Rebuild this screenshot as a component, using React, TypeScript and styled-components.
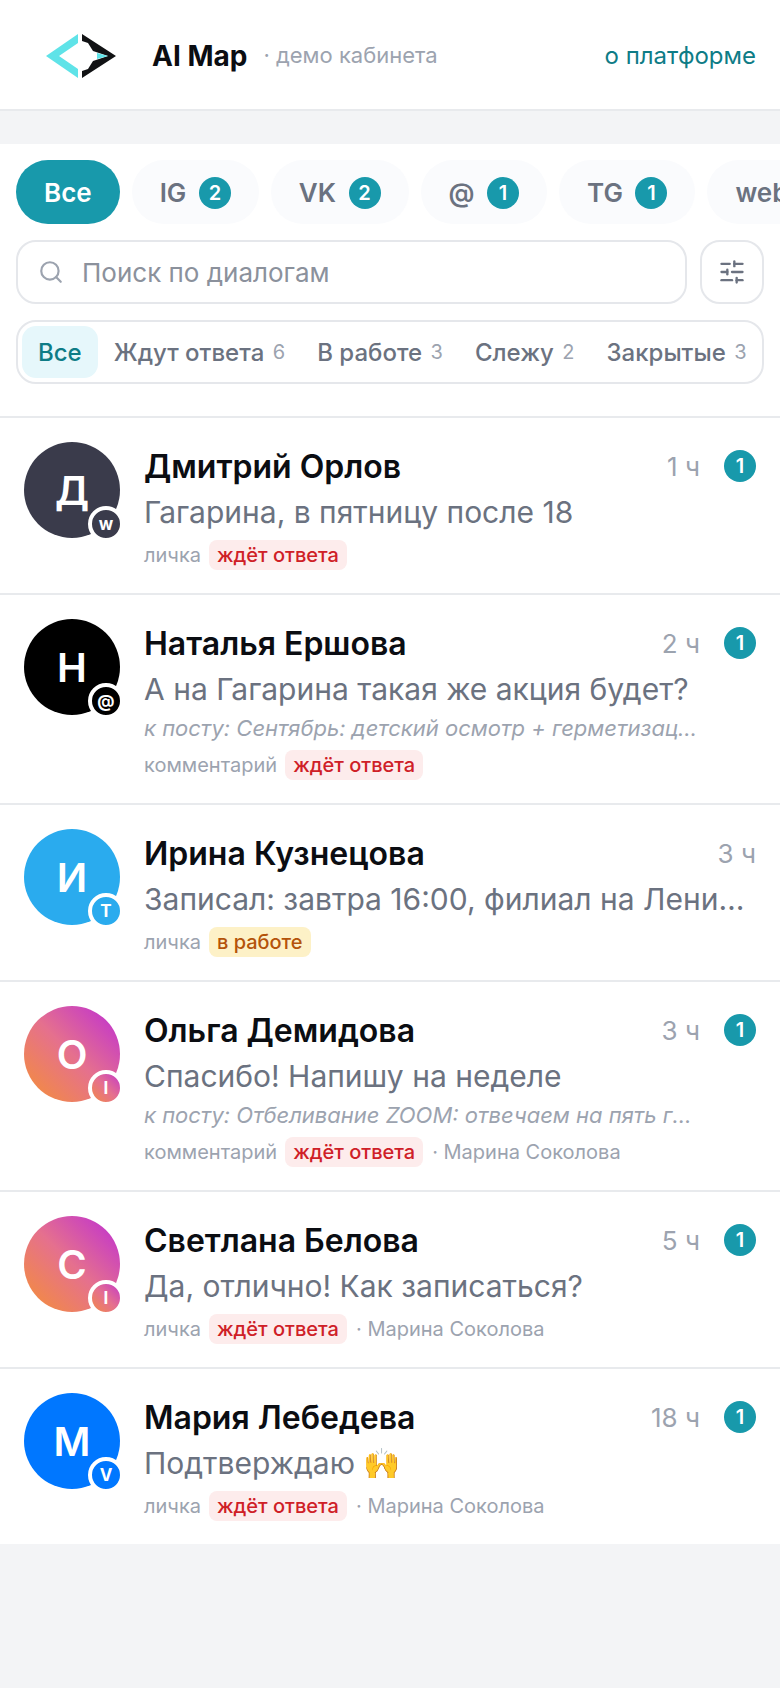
import { Search, SlidersHorizontal } from "lucide-react";
import { createGlobalStyle, styled } from "styled-components";

const GlobalStyle = createGlobalStyle`
  html, body {
    margin: 0;
    padding: 0;
    background: #f3f4f6;
    font-family: Inter, "Noto Sans", sans-serif;
  }
  * { box-sizing: border-box; }
`;

const Page = styled.div`
  width: 780px;
  min-height: 1688px;
  background: #f3f4f6;
  overflow: hidden;
`;

const Header = styled.header`
  height: 111px;
  background: #fff;
  border-bottom: 2px solid #e8eaed;
  display: flex;
  align-items: center;
  padding: 2px 24px 0 46px;
`;

const Logo = styled.svg`
  width: 71px;
  height: 44px;
  flex-shrink: 0;
  margin-right: 35px;
`;

const Brand = styled.span`
  font-size: 28px;
  font-weight: 700;
  color: #0b0d12;
  margin-right: 16px;
`;

const Sub = styled.span`
  font-size: 22px;
  color: #9ca3af;
  position: relative;
  top: -1px;
`;

const About = styled.a`
  margin-left: auto;
  font-size: 24px;
  color: #0e7c86;
`;

const Panel = styled.section`
  margin-top: 33px;
  background: #fff;
  padding: 16px 16px 32px;
  display: flex;
  flex-direction: column;
  border-bottom: 2px solid #e8eaed;
`;

const Chips = styled.div`
  display: flex;
  gap: 12px;
  overflow: hidden;
  margin-right: -16px;
`;

const Chip = styled.div<{ $active?: boolean }>`
  height: 64px;
  flex-shrink: 0;
  padding: 0 28px;
  border-radius: 32px;
  display: flex;
  align-items: center;
  gap: 12.5px;
  font-size: 26px;
  font-weight: 600;
  background: ${({ $active }) => ($active ? "#1899ab" : "#fafbfd")};
  color: ${({ $active }) => ($active ? "#fff" : "#6b7280")};
`;

const Count = styled.span`
  width: 32px;
  height: 32px;
  border-radius: 50%;
  background: #1899ab;
  color: #fff;
  font-size: 20px;
  font-weight: 600;
  display: flex;
  align-items: center;
  justify-content: center;
  flex-shrink: 0;
`;

const ChipCount = styled(Count)`
  position: relative;
  top: 1px;
`;

const SearchRow = styled.div`
  display: flex;
  gap: 13px;
  margin-top: 16px;
`;

const SearchBox = styled.label`
  flex: 1;
  height: 64px;
  border: 2px solid #e5e7eb;
  border-radius: 20px;
  display: flex;
  align-items: center;
  gap: 18px;
  padding: 0 20px;
  color: #9ca3af;
`;

const SearchInput = styled.input`
  flex: 1;
  min-width: 0;
  border: none;
  outline: none;
  background: none;
  padding: 0;
  font-family: inherit;
  font-size: 26px;
  color: #111827;
  &::placeholder {
    color: #8b919c;
    opacity: 1;
  }
`;

const FilterButton = styled.button`
  width: 64px;
  height: 64px;
  border: 2px solid #e5e7eb;
  border-radius: 20px;
  background: #fff;
  color: #6b7280;
  padding: 0;
  display: flex;
  align-items: center;
  justify-content: center;
`;

const Tabs = styled.div`
  display: flex;
  height: 64px;
  margin-top: 16px;
  padding: 4px;
  border: 2px solid #e5e7eb;
  border-radius: 20px;
  overflow: hidden;
`;

const Tab = styled.div<{ $active?: boolean }>`
  flex-shrink: 0;
  padding: 0 16px;
  border-radius: 14px;
  display: flex;
  align-items: center;
  gap: 8.5px;
  font-size: 24px;
  font-weight: 500;
  background: ${({ $active }) => ($active ? "#e6f7fb" : "transparent")};
  color: ${({ $active }) => ($active ? "#0e7c86" : "#6b7280")};
`;

const TabCount = styled.span`
  font-size: 20px;
  font-weight: 400;
  color: #9ca3af;
`;

const List = styled.div`
  background: #fff;
`;

const Row = styled.article`
  display: flex;
  gap: 24px;
  padding: 24px 24px 23px;
  border-bottom: 2px solid #e8eaed;
  &:last-child {
    border-bottom: none;
  }
`;

const Avatar = styled.div<{ $bg: string }>`
  position: relative;
  width: 96px;
  height: 96px;
  flex-shrink: 0;
  border-radius: 50%;
  background: ${({ $bg }) => $bg};
  color: #fff;
  font-size: 40px;
  font-weight: 600;
  display: flex;
  align-items: center;
  justify-content: center;
`;

const NetBadge = styled.span<{ $bg: string }>`
  position: absolute;
  right: -4px;
  bottom: -4px;
  width: 36px;
  height: 36px;
  border-radius: 50%;
  border: 4px solid #fff;
  background: ${({ $bg }) => $bg};
  background-origin: border-box;
  color: #fff;
  font-size: 17px;
  font-weight: 700;
  display: flex;
  align-items: center;
  justify-content: center;
`;

const Body = styled.div`
  flex: 1;
  min-width: 0;
`;

const TopLine = styled.div`
  display: flex;
  align-items: center;
  height: 44px;
  margin-top: 2px;
`;

const Name = styled.div`
  flex: 1;
  min-width: 0;
  font-size: 32px;
  font-weight: 600;
  color: #0b0d12;
`;

const Time = styled.span`
  font-size: 26px;
  color: #9ca3af;
`;

const Unread = styled(Count)`
  margin-left: 24px;
`;

const Message = styled.div`
  margin-top: 4px;
  height: 40px;
  line-height: 40px;
  font-size: 30px;
  color: #6b7280;
  white-space: nowrap;
  overflow: hidden;
  text-overflow: ellipsis;
`;

const Post = styled.div`
  margin-top: 3px;
  height: 32px;
  line-height: 32px;
  max-width: 555px;
  font-size: 22px;
  font-style: italic;
  color: #9ca3af;
  white-space: nowrap;
  overflow: hidden;
  text-overflow: ellipsis;
`;

const Meta = styled.div`
  margin-top: 8px;
  display: flex;
  align-items: center;
  gap: 8px;
  font-size: 20px;
  color: #9ca3af;
  ${Post} + & {
    margin-top: 6px;
  }
`;

const Tag = styled.span<{ $kind: "wait" | "work" }>`
  height: 30px;
  padding: 0 8px;
  border-radius: 8px;
  display: flex;
  align-items: center;
  font-weight: 500;
  background: ${({ $kind }) => ($kind === "wait" ? "#fdecec" : "#fdf1c7")};
  color: ${({ $kind }) => ($kind === "wait" ? "#cf2027" : "#b4530a")};
`;

const Manager = styled.span`
  margin-left: 1px;
`;

const IG = "linear-gradient(45deg, #f59034 0%, #e5708e 50%, #bd2cd6 100%)";

type Dialog = {
  name: string;
  time: string;
  unread: boolean;
  message: string;
  post?: string;
  kind: string;
  tag: "wait" | "work";
  manager?: string;
  letter: string;
  net: string;
  bg: string;
};

const dialogs: Dialog[] = [
  {
    name: "Дмитрий Орлов",
    time: "1 ч",
    unread: true,
    message: "Гагарина, в пятницу после 18",
    kind: "личка",
    tag: "wait",
    letter: "Д",
    net: "w",
    bg: "#3a3b4b",
  },
  {
    name: "Наталья Ершова",
    time: "2 ч",
    unread: true,
    message: "А на Гагарина такая же акция будет?",
    post: "к посту: Сентябрь: детский осмотр + герметизация зубов для детей",
    kind: "комментарий",
    tag: "wait",
    letter: "Н",
    net: "@",
    bg: "#000",
  },
  {
    name: "Ирина Кузнецова",
    time: "3 ч",
    unread: false,
    message: "Записал: завтра 16:00, филиал на Ленина, доктор Иванова",
    kind: "личка",
    tag: "work",
    letter: "И",
    net: "T",
    bg: "#2aabee",
  },
  {
    name: "Ольга Демидова",
    time: "3 ч",
    unread: true,
    message: "Спасибо! Напишу на неделе",
    post: "к посту: Отбеливание ZOOM: отвечаем на пять главных вопросов",
    kind: "комментарий",
    tag: "wait",
    manager: "Марина Соколова",
    letter: "О",
    net: "I",
    bg: IG,
  },
  {
    name: "Светлана Белова",
    time: "5 ч",
    unread: true,
    message: "Да, отлично! Как записаться?",
    kind: "личка",
    tag: "wait",
    manager: "Марина Соколова",
    letter: "С",
    net: "I",
    bg: IG,
  },
  {
    name: "Мария Лебедева",
    time: "18 ч",
    unread: true,
    message: "Подтверждаю 🙌",
    kind: "личка",
    tag: "wait",
    manager: "Марина Соколова",
    letter: "М",
    net: "V",
    bg: "#0077ff",
  },
];

const chips = [
  { label: "Все", active: true },
  { label: "IG", count: 2 },
  { label: "VK", count: 2 },
  { label: "@", count: 1 },
  { label: "TG", count: 1 },
  { label: "web", count: 1 },
];

const tabs = [
  { label: "Все", active: true },
  { label: "Ждут ответа", count: 6 },
  { label: "В работе", count: 3 },
  { label: "Слежу", count: 2 },
  { label: "Закрытые", count: 3 },
];

const AppLogo = () => (
  <Logo viewBox="47 34 71 44">
    <polygon points="79,34 47,56 79,78 79,69 60,56 79,43" fill="#5fe3e8" />
    <polygon
      points="83,34 117,56 83,78 83,71 89,69 94,61 100,59 109,56 100,53 94,51 89,43 83,41"
      fill="#111214"
    />
    <polygon points="98,53 109,56 98,59" fill="#5fe3e8" />
  </Logo>
);

export default function App() {
  return (
    <Page>
      <GlobalStyle />
      <Header>
        <AppLogo />
        <Brand>AI Map</Brand>
        <Sub>· демо кабинета</Sub>
        <About>о платформе</About>
      </Header>
      <Panel>
        <Chips>
          {chips.map((c) => (
            <Chip key={c.label} $active={c.active}>
              {c.label}
              {c.count && <ChipCount>{c.count}</ChipCount>}
            </Chip>
          ))}
        </Chips>
        <SearchRow>
          <SearchBox>
            <Search size={26} strokeWidth={2} />
            <SearchInput placeholder="Поиск по диалогам" />
          </SearchBox>
          <FilterButton>
            <SlidersHorizontal size={28} strokeWidth={2} />
          </FilterButton>
        </SearchRow>
        <Tabs>
          {tabs.map((t) => (
            <Tab key={t.label} $active={t.active}>
              {t.label}
              {t.count && <TabCount>{t.count}</TabCount>}
            </Tab>
          ))}
        </Tabs>
      </Panel>
      <List>
        {dialogs.map((d) => (
          <Row key={d.name}>
            <Avatar $bg={d.bg}>
              {d.letter}
              <NetBadge $bg={d.bg}>{d.net}</NetBadge>
            </Avatar>
            <Body>
              <TopLine>
                <Name>{d.name}</Name>
                <Time>{d.time}</Time>
                {d.unread && <Unread>1</Unread>}
              </TopLine>
              <Message>{d.message}</Message>
              {d.post && <Post>{d.post}</Post>}
              <Meta>
                {d.kind}
                <Tag $kind={d.tag}>
                  {d.tag === "wait" ? "ждёт ответа" : "в работе"}
                </Tag>
                {d.manager && <Manager>· {d.manager}</Manager>}
              </Meta>
            </Body>
          </Row>
        ))}
      </List>
    </Page>
  );
}
